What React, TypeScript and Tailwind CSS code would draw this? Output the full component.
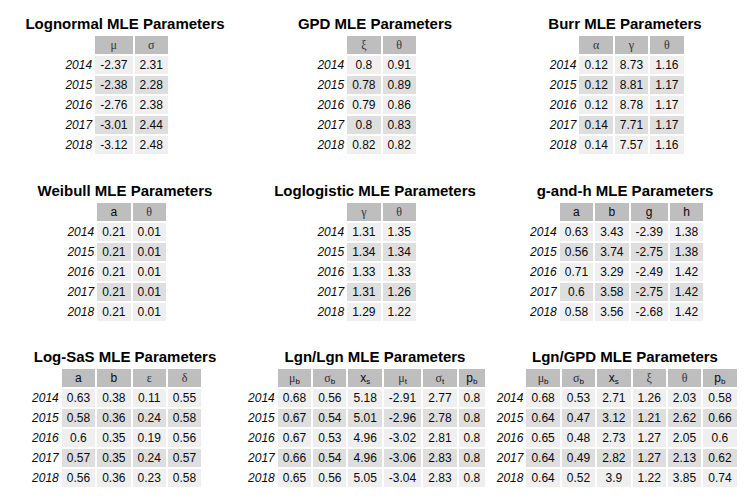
import type { ReactNode } from "react"

const G = ({ children }: { children: ReactNode }) => (
  <span className="font-['Liberation_Serif',serif] text-[12px] text-[#333]">{children}</span>
)

const Sub = ({ base, sub, greek }: { base: string; sub: string; greek?: boolean }) => (
  <span>
    {greek ? <G>{base}</G> : base}
    <sub className="text-[8px]">{sub}</sub>
  </span>
)

type Table = { title: string; cols: ReactNode[]; rows: string[][] }

const years = ["2014", "2015", "2016", "2017", "2018"]

const tables: Table[] = [
  {
    title: "Lognormal MLE Parameters",
    cols: [<G>μ</G>, <G>σ</G>],
    rows: [["-2.37", "2.31"], ["-2.38", "2.28"], ["-2.76", "2.38"], ["-3.01", "2.44"], ["-3.12", "2.48"]],
  },
  {
    title: "GPD MLE Parameters",
    cols: [<G>ξ</G>, <G>θ</G>],
    rows: [["0.8", "0.91"], ["0.78", "0.89"], ["0.79", "0.86"], ["0.8", "0.83"], ["0.82", "0.82"]],
  },
  {
    title: "Burr MLE Parameters",
    cols: [<G>α</G>, <G>γ</G>, <G>θ</G>],
    rows: [
      ["0.12", "8.73", "1.16"],
      ["0.12", "8.81", "1.17"],
      ["0.12", "8.78", "1.17"],
      ["0.14", "7.71", "1.17"],
      ["0.14", "7.57", "1.16"],
    ],
  },
  {
    title: "Weibull MLE Parameters",
    cols: ["a", <G>θ</G>],
    rows: [["0.21", "0.01"], ["0.21", "0.01"], ["0.21", "0.01"], ["0.21", "0.01"], ["0.21", "0.01"]],
  },
  {
    title: "Loglogistic MLE Parameters",
    cols: [<G>γ</G>, <G>θ</G>],
    rows: [["1.31", "1.35"], ["1.34", "1.34"], ["1.33", "1.33"], ["1.31", "1.26"], ["1.29", "1.22"]],
  },
  {
    title: "g-and-h MLE Parameters",
    cols: ["a", "b", "g", "h"],
    rows: [
      ["0.63", "3.43", "-2.39", "1.38"],
      ["0.56", "3.74", "-2.75", "1.38"],
      ["0.71", "3.29", "-2.49", "1.42"],
      ["0.6", "3.58", "-2.75", "1.42"],
      ["0.58", "3.56", "-2.68", "1.42"],
    ],
  },
  {
    title: "Log-SaS MLE Parameters",
    cols: ["a", "b", <G>ε</G>, <G>δ</G>],
    rows: [
      ["0.63", "0.38", "0.11", "0.55"],
      ["0.58", "0.36", "0.24", "0.58"],
      ["0.6", "0.35", "0.19", "0.56"],
      ["0.57", "0.35", "0.24", "0.57"],
      ["0.56", "0.36", "0.23", "0.58"],
    ],
  },
  {
    title: "Lgn/Lgn MLE Parameters",
    cols: [
      <Sub base="μ" sub="b" greek />,
      <Sub base="σ" sub="b" greek />,
      <Sub base="x" sub="s" />,
      <Sub base="μ" sub="t" greek />,
      <Sub base="σ" sub="t" greek />,
      <Sub base="p" sub="b" />,
    ],
    rows: [
      ["0.68", "0.56", "5.18", "-2.91", "2.77", "0.8"],
      ["0.67", "0.54", "5.01", "-2.96", "2.78", "0.8"],
      ["0.67", "0.53", "4.96", "-3.02", "2.81", "0.8"],
      ["0.66", "0.54", "4.96", "-3.06", "2.83", "0.8"],
      ["0.65", "0.56", "5.05", "-3.04", "2.83", "0.8"],
    ],
  },
  {
    title: "Lgn/GPD MLE Parameters",
    cols: [
      <Sub base="μ" sub="b" greek />,
      <Sub base="σ" sub="b" greek />,
      <Sub base="x" sub="s" />,
      <G>ξ</G>,
      <G>θ</G>,
      <Sub base="p" sub="b" />,
    ],
    rows: [
      ["0.68", "0.53", "2.71", "1.26", "2.03", "0.58"],
      ["0.64", "0.47", "3.12", "1.21", "2.62", "0.66"],
      ["0.65", "0.48", "2.73", "1.27", "2.05", "0.6"],
      ["0.64", "0.49", "2.82", "1.27", "2.13", "0.62"],
      ["0.64", "0.52", "3.9", "1.22", "3.85", "0.74"],
    ],
  },
]

const gridCols: Record<number, string> = {
  2: "grid-cols-[32px_auto_auto_19px]",
  3: "grid-cols-[32px_auto_auto_auto_19px]",
  4: "grid-cols-[32px_auto_auto_auto_auto_19px]",
  6: "grid-cols-[32px_auto_auto_auto_auto_auto_auto_19px]",
}

function ParamTable({ table }: { table: Table }) {
  return (
    <div className="flex flex-col items-center pt-[15px]">
      <h2 className="text-[15px] leading-[18px] font-bold text-black whitespace-nowrap">{table.title}</h2>
      <div className={`mt-[3px] grid ${gridCols[table.cols.length]} gap-[2px] text-[12px] leading-[18px] text-[#0a0a0a]`}>
        {/* header */}
        <div />
        {table.cols.map((c, i) => (
          <div key={i} className="h-[18px] bg-[#bebebe] px-[5px] text-center whitespace-nowrap">
            {c}
          </div>
        ))}
        <div />

        {table.rows.map((row, r) => (
          <div key={r} className="contents">
            <div className="h-[18px] pr-[1px] text-right italic whitespace-nowrap">{years[r]}</div>
            {row.map((v, i) => (
              <div
                key={i}
                className={`h-[18px] px-[5px] text-center whitespace-nowrap ${
                  r % 2 === 0 ? "bg-[#efefef]" : "bg-[#dedede]"
                }`}
              >
                {v}
              </div>
            ))}
            <div />
          </div>
        ))}
      </div>
    </div>
  )
}

export default function App() {
  return (
    <div className="w-[750px] h-[500px] bg-white overflow-hidden font-['Liberation_Sans',Arial,sans-serif]">
      <div className="grid grid-cols-[250px_250px_250px] grid-rows-3 h-[500px]">
        {tables.map((t) => (
          <ParamTable key={t.title} table={t} />
        ))}
      </div>
    </div>
  )
}
